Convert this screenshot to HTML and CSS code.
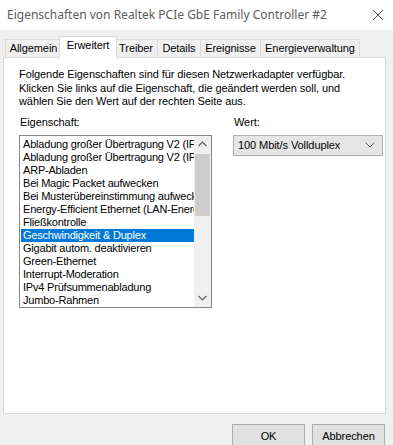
FILE: index.html
```html
<!DOCTYPE html>
<html lang="de">
<head>
<meta charset="utf-8">
<title>Eigenschaften</title>
<link rel="stylesheet" href="styles.css">
</head>
<body>
<div class="titlebar">
  <span class="title">Eigenschaften von Realtek PCIe GbE Family Controller #2</span>
  <svg class="close" width="12" height="12" viewBox="0 0 12 12"><path d="M1 1 L11 11 M11 1 L1 11" stroke="#555" stroke-width="1" fill="none"/></svg>
</div>
<div class="dialog">
  <div class="tabs">
    <div class="tab t-allg">Allgemein</div>
    <div class="tab active t-erw">Erweitert</div>
    <div class="tab t-trb">Treiber</div>
    <div class="tab t-det">Details</div>
    <div class="tab t-erg">Ereignisse</div>
    <div class="tab t-ene">Energieverwaltung</div>
  </div>
  <div class="panel">
    <p class="intro">Folgende Eigenschaften sind für diesen Netzwerkadapter verfügbar.<br>Klicken Sie links auf die Eigenschaft, die geändert werden soll, und<br>wählen Sie den Wert auf der rechten Seite aus.</p>
    <div class="props">
      <div class="col-left">
        <div class="label">Eigenschaft:</div>
        <div class="listbox">
          <ul class="items">
            <li>Abladung großer Übertragung V2 (IPv4)</li>
            <li>Abladung großer Übertragung V2 (IPv6)</li>
            <li>ARP-Abladen</li>
            <li>Bei Magic Packet aufwecken</li>
            <li>Bei Musterübereinstimmung aufwecken</li>
            <li>Energy-Efficient Ethernet (LAN-Energiesparmodus)</li>
            <li>Fließkontrolle</li>
            <li class="selected">Geschwindigkeit &amp; Duplex</li>
            <li>Gigabit autom. deaktivieren</li>
            <li>Green-Ethernet</li>
            <li>Interrupt-Moderation</li>
            <li>IPv4 Prüfsummenabladung</li>
            <li>Jumbo-Rahmen</li>
          </ul>
          <div class="scrollbar">
            <div class="sb-btn"><svg width="9" height="6" viewBox="0 0 9 6"><path d="M0.5 5 L4.5 1 L8.5 5" stroke="#606060" stroke-width="1.2" fill="none"/></svg></div>
            <div class="sb-track"><div class="sb-thumb"></div></div>
            <div class="sb-btn"><svg width="9" height="6" viewBox="0 0 9 6"><path d="M0.5 1 L4.5 5 L8.5 1" stroke="#606060" stroke-width="1.2" fill="none"/></svg></div>
          </div>
        </div>
      </div>
      <div class="col-right">
        <div class="label">Wert:</div>
        <div class="combo">
          <span>100 Mbit/s Vollduplex</span>
          <svg width="10" height="6" viewBox="0 0 10 6"><path d="M0.5 0.5 L5 5 L9.5 0.5" stroke="#555" stroke-width="1" fill="none"/></svg>
        </div>
      </div>
    </div>
  </div>
  <div class="buttons">
    <button class="btn">OK</button>
    <button class="btn">Abbrechen</button>
  </div>
</div>
</body>
</html>
```

FILE: styles.css
```css
* { box-sizing: border-box; }
html, body { margin: 0; padding: 0; }
body {
  width: 393px;
  height: 445px;
  overflow: hidden;
  background: #f0f0f0;
  font-family: "Liberation Sans", Arial, sans-serif;
  font-size: 11px;
  letter-spacing: -0.08px;
  color: #000;
}
.titlebar {
  height: 30px;
  background: #ffffff;
  display: flex;
  align-items: center;
  justify-content: space-between;
  padding: 0 9px 1px 7px;
}
.title {
  font-family: "Noto Sans", "Open Sans", sans-serif;
  font-size: 12px;
  letter-spacing: 0;
  color: #5c5c5c;
}
.close { display: block; }
.dialog { display: flex; flex-direction: column; }
.tabs {
  margin-top: 6px;
  height: 21px;
  display: flex;
  align-items: flex-end;
  padding-left: 6px;
}
.tab {
  height: 18px;
  border: 1px solid #d9d9d9;
  border-bottom: none;
  background: #f0f0f0;
  margin-left: -1px;
  padding-top: 2px;
  text-align: center;
  white-space: nowrap;
}
.tab.active {
  height: 22px;
  margin: 0 -2px -1px -3px;
  background: #fff;
  position: relative;
  z-index: 1;
  padding-top: 2px;
}
.t-allg { width: 57px; }
.t-erw { width: 58px; }
.t-trb { width: 44px; }
.t-det { width: 44px; }
.t-erg { width: 61px; }
.t-ene { width: 100px; }
.panel {
  margin: 0 7px 0 3px;
  height: 357px;
  background: #fff;
  border: 1px solid #d9d9d9;
  padding: 10px 0 0 15px;
}
.intro {
  margin: 0;
  line-height: 13.5px;
}
.props {
  display: flex;
  gap: 21px;
  margin-top: 7px;
}
.label { line-height: 13px; height: 13px; margin-bottom: 6px; padding-left: 1px; }
.col-left { width: 193px; flex-shrink: 0; }
.col-right { width: 150px; flex-shrink: 0; }
.listbox {
  display: flex;
  border: 1px solid #828790;
  height: 173px;
  width: 193px;
  background: #fff;
}
.items {
  list-style: none;
  margin: 0;
  padding: 2px 0 0 1px;
  width: 174px;
  overflow: hidden;
  letter-spacing: -0.2px;
}
.items li {
  height: 13px;
  line-height: 13px;
  padding-left: 2px;
  white-space: nowrap;
  overflow: hidden;
}
.items li.selected { background: #0078d7; color: #fff; }
.scrollbar {
  width: 17px;
  background: #f0f0f0;
  display: flex;
  flex-direction: column;
}
.sb-btn {
  height: 17px;
  display: flex;
  align-items: center;
  justify-content: center;
}
.sb-track { flex: 1; padding: 1px 1px 0 1px; }
.sb-thumb { height: 62px; background: #cdcdcd; }
.combo {
  height: 21px;
  border: 1px solid #adadad;
  background: #e5e5e5;
  display: flex;
  align-items: center;
  justify-content: space-between;
  padding: 0 7px 0 4px;
}
.buttons {
  display: flex;
  justify-content: flex-end;
  gap: 7px;
  padding: 10px 8px 0 0;
}
.btn {
  width: 73px;
  height: 23px;
  border: 1px solid #adadad;
  background: #e1e1e1;
  font-family: "Liberation Sans", Arial, sans-serif;
  font-size: 11px;
  letter-spacing: -0.08px;
  color: #000;
  padding: 0;
}
```
